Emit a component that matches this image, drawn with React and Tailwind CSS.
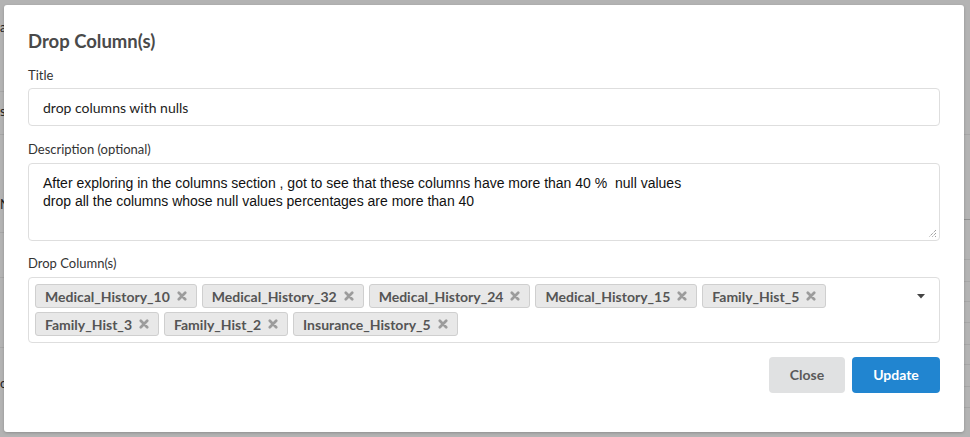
import React from "react";

const tagsRow = [
  "Medical_History_10",
  "Medical_History_32",
  "Medical_History_24",
  "Medical_History_15",
  "Family_Hist_5",
  "Family_Hist_3",
  "Family_Hist_2",
  "Insurance_History_5",
];

function XIcon() {
  return (
    <svg width="10" height="10" viewBox="0 0 10 10" className="ml-[7px] shrink-0">
      <path d="M1.8 1.8 L8.2 8.2 M8.2 1.8 L1.8 8.2" stroke="#9c9c9c" strokeWidth="2.7" strokeLinecap="round" />
    </svg>
  );
}

function Tag({ label }) {
  return (
    <div className="flex h-[24px] items-center rounded-[3px] border border-[#cfcfcf] bg-[#e8e8e8] pl-[9px] pr-[9px] text-[14px] font-bold text-[#555]">
      <span>{label}</span>
      <XIcon />
    </div>
  );
}

export default function App() {
  return (
    <div
      className="relative h-[437px] w-[970px] overflow-hidden bg-[#b3b3b3]"
      style={{ fontFamily: "Lato, 'Noto Sans', sans-serif" }}
    >
      {/* faint page content beneath the overlay */}
      <div className="flex h-full w-full justify-between">
        <div className="flex w-[10px] flex-col text-[13px] text-[#222]">
          <div className="h-[92px] border-b border-[#a6a6a6] pt-[18px]">a</div>
          <div className="h-[43px] border-b border-[#a6a6a6] pt-[10px]">s</div>
          <div className="h-[98px] border-b border-[#a6a6a6] pt-[60px]">N</div>
          <div className="h-[45px] border-b border-[#a6a6a6]"></div>
          <div className="h-[70px] border-b border-[#a6a6a6]"></div>
          <div className="h-[42px] pt-[26px]">o</div>
        </div>
        <div className="flex w-[8px] flex-col">
          <div className="h-[135px] border-b border-[#a6a6a6]"></div>
          <div className="h-[85px] border-b border-[#8f8f8f]"></div>
          <div className="h-[40px] border-b border-[#a6a6a6]"></div>
          <div className="h-[22px] border-b border-[#a6a6a6]"></div>
          <div className="h-[20px] border-b border-[#a6a6a6]"></div>
          <div className="h-[21px] border-b border-[#a6a6a6]"></div>
          <div className="h-[22px] border-b border-[#a6a6a6]"></div>
          <div className="h-[20px] border-b border-[#a6a6a6]"></div>
          <div className="h-[22px] border-b border-[#a6a6a6]"></div>
          <div className="h-[21px] border-b border-[#a6a6a6]"></div>
        </div>
      </div>

      {/* modal */}
      <div className="absolute left-[4px] top-[5px] flex h-[427px] w-[960px] flex-col rounded-[3px] bg-white px-[24px] pt-[24px] shadow-[0_1px_3px_rgba(0,0,0,0.2)]">
        <div className="h-[24px] text-[18.5px] font-bold leading-[24px] text-[#4a4a4a]">Drop Column(s)</div>

        <div className="mt-[14px] h-[16px] text-[13px] leading-[16px] text-[#333]">Title</div>
        <div className="mt-[5px] flex h-[38px] items-center rounded-[4px] border border-[#dedede] px-[14px] text-[14px] text-[#222]">
          drop columns with nulls
        </div>

        <div className="mt-[15px] h-[16px] text-[13px] leading-[16px] text-[#333]">Description (optional)</div>
        <div className="relative mt-[6px] h-[78px] rounded-[4px] border border-[#dedede] px-[14px] pt-[10px] text-[14px] leading-[18px] text-[#111]" style={{ fontFamily: "'Liberation Sans', Arial, sans-serif" }}>
          <div className="whitespace-pre">After exploring in the columns section , got to see that these columns have more than 40 %  null values</div>
          <div>drop all the columns whose null values percentages are more than 40</div>
          <svg width="9" height="9" viewBox="0 0 9 9" className="absolute bottom-[2px] right-[2px]">
            <path d="M8 1 L1 8 M8 4 L4 8 M8 7 L7 8" stroke="#777" strokeWidth="1" strokeDasharray="1 1" />
          </svg>
        </div>

        <div className="mt-[14px] h-[16px] text-[13px] leading-[16px] text-[#333]">Drop Column(s)</div>
        <div className="mt-[6px] flex h-[66px] items-start rounded-[4px] border border-[#dedede] pl-[6px] pr-[14px] pt-[6px]">
          <div className="flex flex-1 flex-wrap gap-x-[5px] gap-y-[4px]">
            {tagsRow.map((t) => (
              <Tag key={t} label={t} />
            ))}
          </div>
          <svg width="8" height="5" viewBox="0 0 8 5" className="mt-[10px] shrink-0">
            <path d="M0 0 L8 0 L4 4.5 Z" fill="#444" />
          </svg>
        </div>

        <div className="mt-[14px] flex justify-end gap-[7px]">
          <button className="flex h-[36px] w-[76px] items-center justify-center rounded-[4px] bg-[#e0e1e2] pb-[1px] text-[14px] font-bold text-[#5a5a5a]">
            Close
          </button>
          <button className="flex h-[36px] w-[88px] items-center justify-center rounded-[4px] bg-[#2185d0] pb-[1px] text-[14px] font-bold text-white">
            Update
          </button>
        </div>
      </div>
    </div>
  );
}
